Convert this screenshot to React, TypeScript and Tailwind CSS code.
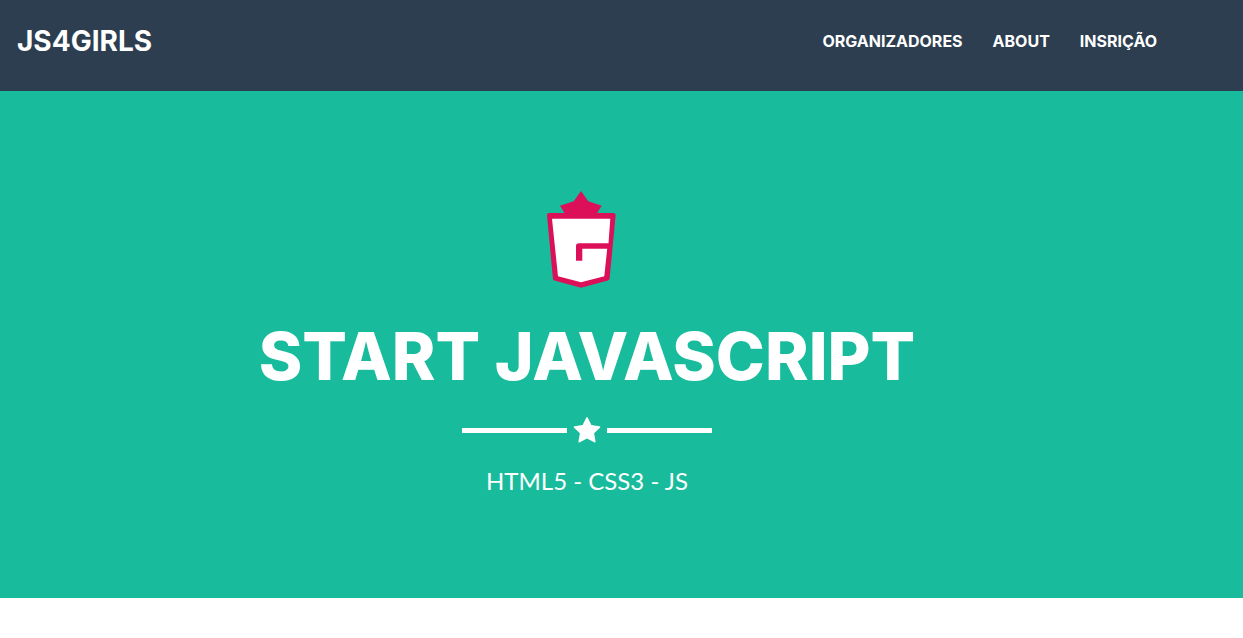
const links = [
  { label: 'ORGANIZADORES', href: '#organizadores' },
  { label: 'ABOUT', href: '#about' },
  { label: 'INSRIÇÃO', href: '#inscricao' },
];

function ShieldLogo() {
  return (
    <svg viewBox="0 0 70 98" className="mr-3 h-[98px] w-[70px]" role="img" aria-label="JS4Girls">
      <path
        d="M35 1 L42.3 11.3 L55.7 15.7 L50.5 24 H19 L14 15.7 L27.7 11.3 Z"
        fill="#dc1059"
      />
      <path
        d="M3 23 H67.5 Q69.8 23 69.6 25.5 L63.6 88.5 Q63.5 90 62 90.4 L35 97.8 L8.3 90.4 Q7 90 6.9 88.5 L1 25.5 Q.8 23 3 23 Z"
        fill="#dc1059"
      />
      <path
        d="M6 28.8 H64.3 L62.5 53.3 H33 Q30 53.3 30 56 V70.8 H36.3 V58.8 H61.2 L58.3 86.2 L35 92.2 L12 86.2 Z"
        fill="#fff"
      />
    </svg>
  );
}

function StarDivider() {
  return (
    <div className="flex items-center justify-center">
      <span className="h-[5px] w-[105px] bg-white" />
      <svg viewBox="24 -30 1744 1806" className="mx-1.5 h-[29px] w-7" aria-hidden="true">
        <path
          d="M1728 647q0 22-26 48l-363 354 86 500q1 7 1 20 0 21-10.5 35.5t-30.5 14.5q-19 0-40-12l-449-236-449 236q-22 12-40 12-21 0-31.5-14.5t-10.5-35.5q0-6 2-20l86-500-364-354q-25-27-25-48 0-37 56-46l502-73 225-455q19-41 49-41t49 41l225 455 502 73q56 9 56 46z"
          fill="#fff"
        />
      </svg>
      <span className="h-[5px] w-[105px] bg-white" />
    </div>
  );
}

export default function App() {
  return (
    <div className="min-h-screen bg-white text-white">
      <header className="bg-[#2c3e50] font-['Inter',sans-serif] font-bold">
        <div className="ml-0.5 flex max-w-[1170px] flex-wrap items-center justify-between px-[15px] pt-5 pb-[29px]">
          <a href="#top" className="text-[28px] leading-[42px]">
            JS4GIRLS
          </a>
          <nav className="flex flex-wrap gap-[30px] text-base leading-[42px]">
            {links.map((link) => (
              <a key={link.href} href={link.href}>
                {link.label}
              </a>
            ))}
          </nav>
        </div>
      </header>
      <main id="top" className="bg-[#18bc9c]">
        <div className="ml-0.5 flex max-w-[1170px] flex-col items-center px-[15px] pt-[99px] pb-[99px] text-center">
          <ShieldLogo />
          <h1 className="mt-8 font-['Inter',sans-serif] text-[66px] leading-[72px] font-extrabold">
            START JAVASCRIPT
          </h1>
          <div className="mt-6">
            <StarDivider />
          </div>
          <p className="mt-[18px] font-['Lato',sans-serif] text-2xl leading-9">HTML5 - CSS3 - JS</p>
        </div>
      </main>
    </div>
  );
}
